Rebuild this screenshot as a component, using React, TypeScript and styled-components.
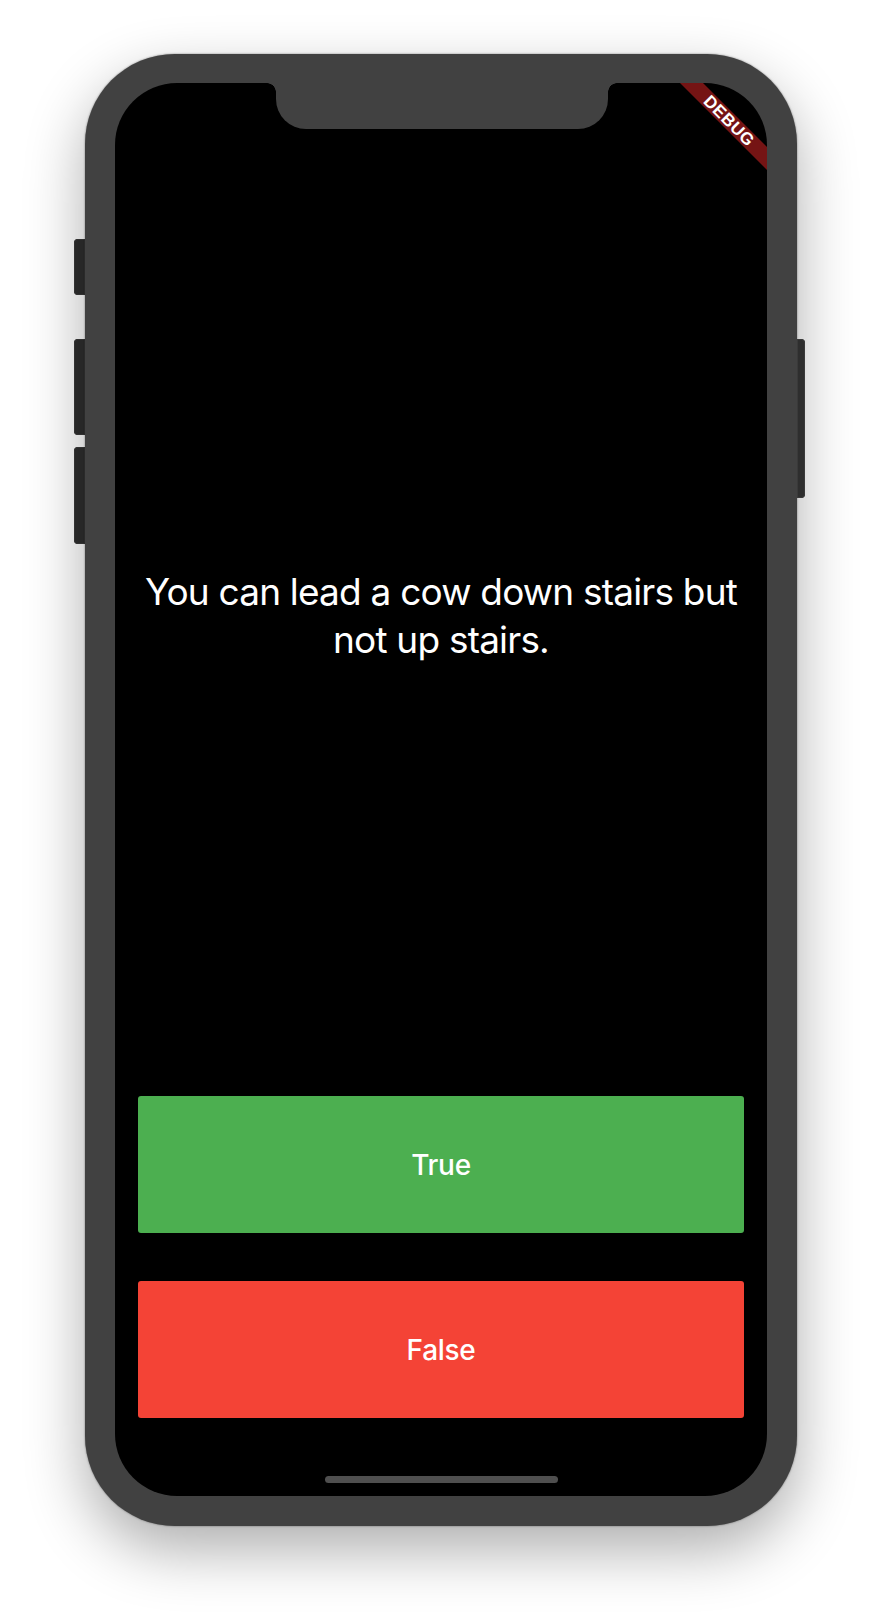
import React from "react";
import styled, { createGlobalStyle } from "styled-components";

const GlobalStyle = createGlobalStyle`
  html, body {
    margin: 0;
    padding: 0;
    background: #ffffff;
  }
  body {
    font-family: Inter, "Noto Sans", sans-serif;
  }
`;

const Page = styled.div`
  width: 882px;
  height: 1612px;
  padding: 54px 0 0 74px;
  box-sizing: border-box;
  overflow: hidden;
  display: flex;
  align-items: flex-start;
`;

const Rail = styled.div<{ $width: number; $top: number }>`
  width: ${(p) => p.$width}px;
  padding-top: ${(p) => p.$top}px;
  display: flex;
  flex-direction: column;
  gap: 0;
`;

const SideButton = styled.div<{ $height: number; $gap?: number; $side: "left" | "right" }>`
  height: ${(p) => p.$height}px;
  margin-top: ${(p) => p.$gap ?? 0}px;
  background: #2e2e2e;
  border-radius: ${(p) => (p.$side === "left" ? "4px 0 0 4px" : "0 4px 4px 0")};
  box-shadow: inset 0 0 0 1px #3a3a3a;
`;

const Frame = styled.div`
  width: 712px;
  height: 1472px;
  flex-shrink: 0;
  box-sizing: border-box;
  padding: 29px 30px 30px 30px;
  background: #414141;
  border-radius: 90px;
  box-shadow: 0 24px 60px rgba(0, 0, 0, 0.32), 0 0 2px rgba(0, 0, 0, 0.5);
`;

const Screen = styled.div`
  position: relative;
  width: 100%;
  height: 100%;
  background: #000000;
  border-radius: 62px;
  overflow: hidden;
  display: flex;
  flex-direction: column;
`;

const TopBar = styled.div`
  height: 77px;
  flex-shrink: 0;
  display: flex;
  justify-content: center;
  align-items: flex-start;
  padding-left: 2px;
`;

const Notch = styled.div`
  position: relative;
  width: 332px;
  height: 46px;
  background: #414141;
  border-radius: 0 0 30px 30px;
  &::before,
  &::after {
    content: "";
    position: absolute;
    top: 0;
    width: 9px;
    height: 9px;
  }
  &::before {
    left: -9px;
    background: radial-gradient(circle at 0 100%, transparent 8.5px, #414141 9px);
  }
  &::after {
    right: -9px;
    background: radial-gradient(circle at 100% 100%, transparent 8.5px, #414141 9px);
  }
`;

const Banner = styled.svg`
  position: absolute;
  top: 0;
  right: 0;
  width: 90px;
  height: 90px;
`;

const QuestionArea = styled.div`
  flex: 1;
  display: flex;
  align-items: center;
  justify-content: center;
  padding: 0 17px;
`;

const Question = styled.p`
  margin: 0;
  color: #ffffff;
  font-family: Inter, "Noto Sans", sans-serif;
  font-size: 37px;
  letter-spacing: -0.8px;
  line-height: 48px;
  font-weight: 400;
  text-align: center;
`;

const ButtonCell = styled.div`
  height: 185px;
  flex-shrink: 0;
  box-sizing: border-box;
  padding: 24px 23px;
  display: flex;
`;

const AnswerButton = styled.button<{ $color: string }>`
  flex: 1;
  border: none;
  border-radius: 3px;
  background: ${(p) => p.$color};
  color: #ffffff;
  font-family: Inter, "Noto Sans", sans-serif;
  font-size: 28px;
  font-weight: 500;
  letter-spacing: -0.3px;
  cursor: pointer;
  padding: 0;
`;

const BottomBar = styled.div`
  height: 54px;
  flex-shrink: 0;
  box-sizing: border-box;
  padding-bottom: 13px;
  display: flex;
  justify-content: center;
  align-items: flex-end;
`;

const HomeIndicator = styled.div`
  width: 233px;
  height: 7px;
  border-radius: 4px;
  background: #4f4f4f;
`;

export default function App() {
  return (
    <>
      <GlobalStyle />
      <Page>
        <Rail $width={11} $top={185}>
          <SideButton $side="left" $height={56} />
          <SideButton $side="left" $height={96} $gap={44} />
          <SideButton $side="left" $height={97} $gap={12} />
        </Rail>
        <Frame>
          <Screen>
            <TopBar>
              <Notch />
            </TopBar>
            <Banner viewBox="0 0 90 90">
              <polygon points="3,0 26,0 90,64 90,87" fill="#751414" />
              <text
                x="52"
                y="38"
                transform="rotate(45 52 38)"
                textAnchor="middle"
                dominantBaseline="central"
                fill="#ffffff"
                fontFamily="'Liberation Sans', Arial, sans-serif"
                fontWeight="900"
                fontSize="17"
                letterSpacing="0.5"
              >
                DEBUG
              </text>
            </Banner>
            <QuestionArea>
              <Question>You can lead a cow down stairs but not up stairs.</Question>
            </QuestionArea>
            <ButtonCell>
              <AnswerButton $color="#4CAF50">True</AnswerButton>
            </ButtonCell>
            <ButtonCell>
              <AnswerButton $color="#F44336">False</AnswerButton>
            </ButtonCell>
            <BottomBar>
              <HomeIndicator />
            </BottomBar>
          </Screen>
        </Frame>
        <Rail $width={8} $top={285}>
          <SideButton $side="right" $height={159} />
        </Rail>
      </Page>
    </>
  );
}
